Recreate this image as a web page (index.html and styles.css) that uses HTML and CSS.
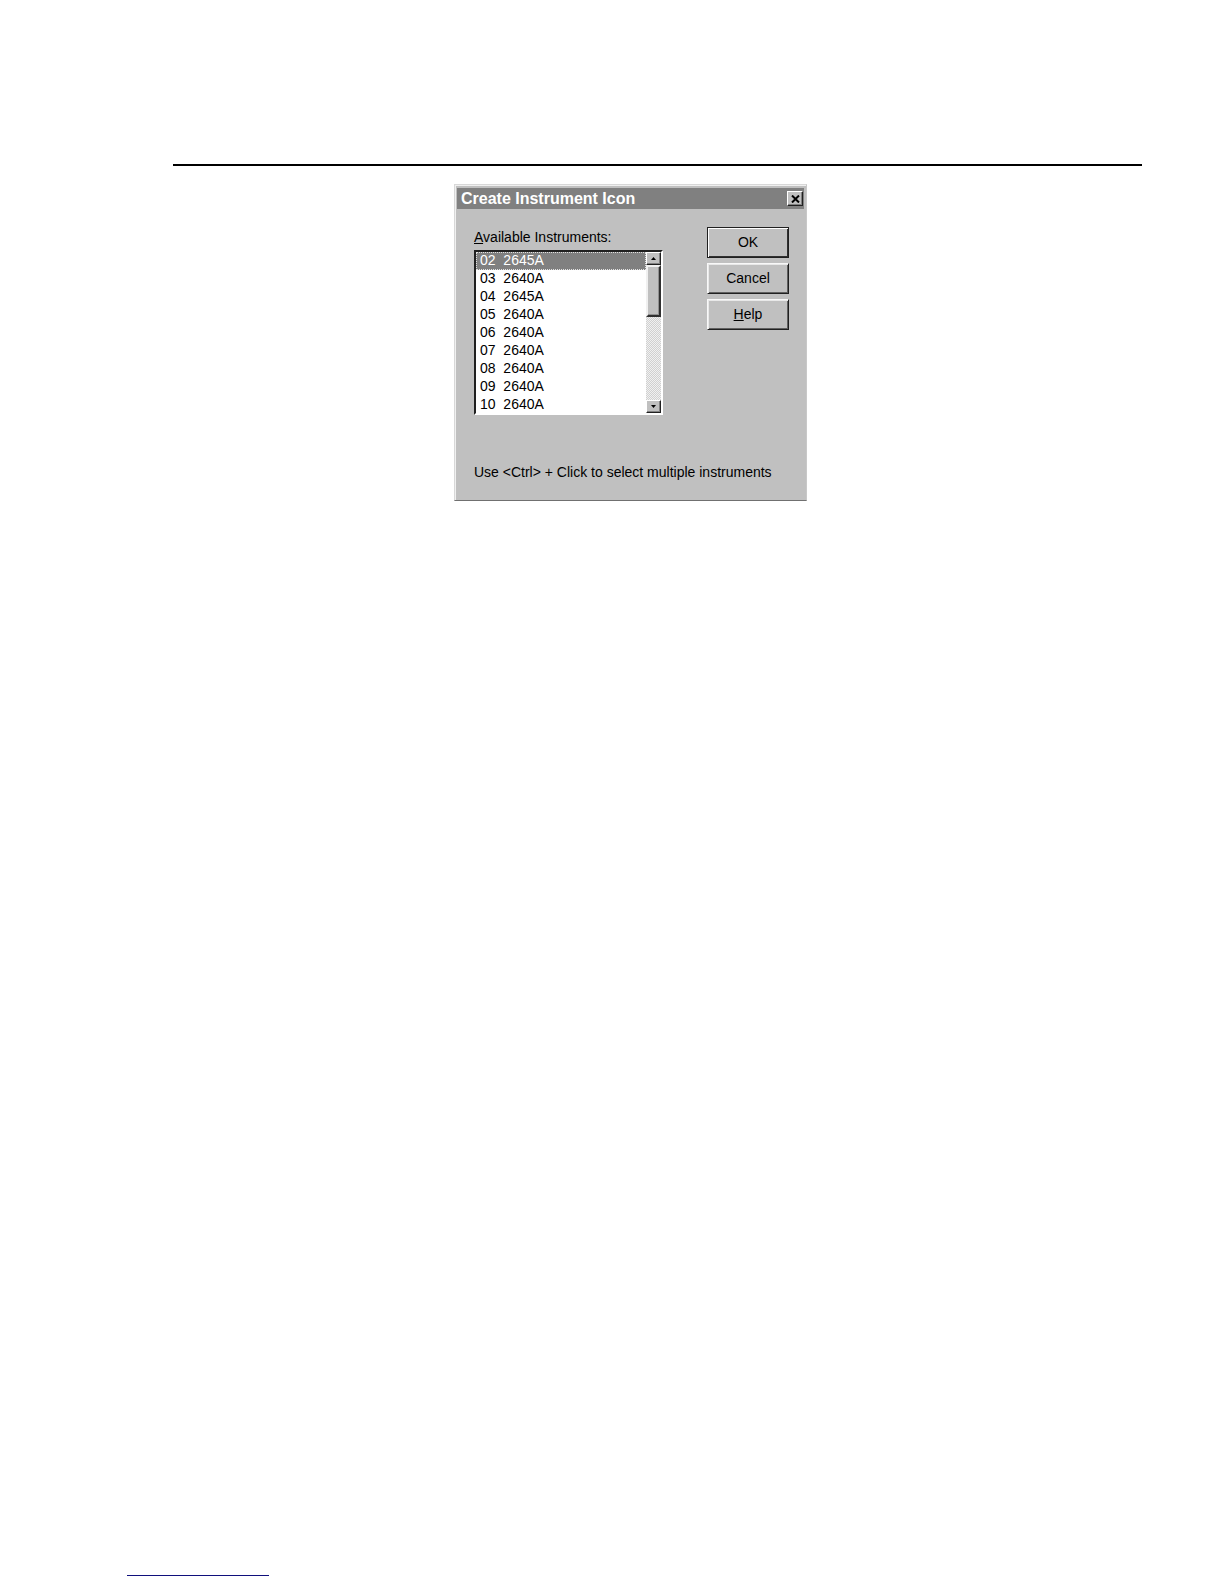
FILE: index.html
```html
<!DOCTYPE html>
<html lang="en">
<head>
<meta charset="utf-8">
<meta name="viewport" content="width=device-width, initial-scale=1">
<title>Create Instrument Icon</title>
<link rel="stylesheet" href="styles.css">
</head>
<body>
<main class="sheet">
  <hr class="rule">
  <section class="dialog" role="dialog" aria-labelledby="dialog-title">
    <header class="titlebar">
      <h1 class="title" id="dialog-title">Create Instrument Icon</h1>
      <button class="close" type="button" aria-label="Close">
        <svg viewBox="0 0 9 8" width="9" height="8"><path d="M1 0.5 L8 7.5 M8 0.5 L1 7.5" stroke="#000" stroke-width="2"/></svg>
      </button>
    </header>
    <form class="form">
      <div class="columns">
        <div class="field">
          <label class="label" for="instruments"><u>A</u>vailable Instruments:</label>
          <div class="listbox">
            <select class="list" id="instruments" multiple size="9">
              <option selected>02&nbsp;&nbsp;2645A</option>
              <option>03&nbsp;&nbsp;2640A</option>
              <option>04&nbsp;&nbsp;2645A</option>
              <option>05&nbsp;&nbsp;2640A</option>
              <option>06&nbsp;&nbsp;2640A</option>
              <option>07&nbsp;&nbsp;2640A</option>
              <option>08&nbsp;&nbsp;2640A</option>
              <option>09&nbsp;&nbsp;2640A</option>
              <option>10&nbsp;&nbsp;2640A</option>
            </select>
            <div class="scrollbar">
              <button class="arrow" type="button" aria-label="Scroll up"><svg viewBox="0 0 5 3" width="5" height="3"><path d="M2.5 0 L5 3 H0 Z"/></svg></button>
              <div class="thumb"></div>
              <div class="track"></div>
              <button class="arrow" type="button" aria-label="Scroll down"><svg viewBox="0 0 5 3" width="5" height="3"><path d="M0 0 H5 L2.5 3 Z"/></svg></button>
            </div>
          </div>
        </div>
        <div class="actions">
          <button class="button default" type="button">OK</button>
          <button class="button" type="button">Cancel</button>
          <button class="button" type="button"><u>H</u>elp</button>
        </div>
      </div>
      <p class="hint">Use &lt;Ctrl&gt; + Click to select multiple instruments</p>
    </form>
  </section>
  <footer class="footer"><hr class="footline"></footer>
</main>
</body>
</html>
```
FILE: styles.css
```css
* { box-sizing: border-box; }

body {
  margin: 0;
  background: #fff;
  color: #000;
  font: 14px/18px "Liberation Sans", Arial, sans-serif;
}

.sheet {
  display: flex;
  flex-direction: column;
  min-height: 100vh;
  padding: 164px 82px 8px 127px;
}

.rule {
  align-self: stretch;
  height: 2px;
  margin: 0 0 18px 46px;
  border: 0;
  background: #000;
}

.dialog {
  width: 353px;
  max-width: 100%;
  margin-left: 327px;
  padding: 2px;
  background: #c0c0c0;
  border: 1px solid #d8d8d8;
  border-right-color: #c8c8c8;
  border-bottom: 1px solid #707070;
  box-shadow: inset 1px 1px #f0f0f0;
}

.titlebar {
  display: flex;
  align-items: center;
  justify-content: space-between;
  height: 21px;
  margin-top: 1px;
  padding: 0 1px 0 4px;
  background: #808080;
}

.title {
  margin: 0;
  color: #fff;
  font-size: 16px;
  line-height: 20px;
}

.close, .arrow {
  display: flex;
  align-items: center;
  justify-content: center;
  padding: 0;
  background: #c0c0c0;
  border: 1px solid;
  border-color: #fff #202020 #202020 #fff;
  box-shadow: inset -1px -1px #808080;
}

.close { width: 16px; height: 15px; }

.form { padding: 18px 15px 17px 17px; }

.columns {
  display: flex;
  justify-content: space-between;
}

.field { padding-top: 1px; }

.label { display: block; margin-bottom: 4px; }

.listbox {
  display: flex;
  width: 189px;
  height: 165px;
  border: 2px solid;
  border-color: #202020 #fff #fff #202020;
  background: #fff;
}

.list {
  flex: 1;
  min-width: 0;
  height: 100%;
  padding: 0;
  overflow: hidden;
  scrollbar-width: none;
  border: 0;
  border-radius: 0;
  outline: 0;
  background: #fff;
  color: #000;
  font: inherit;
}

.list option {
  height: 18px;
  min-height: 18px;
  padding: 0 4px;
  line-height: 18px;
}

.list option:checked {
  background: #808080 linear-gradient(#808080, #808080);
  color: #fff;
  outline: 1px dotted #e0e0e0;
  outline-offset: -1px;
}

.scrollbar {
  display: flex;
  flex-direction: column;
  width: 15px;
  background: #e0e0e0 repeating-conic-gradient(#d0d0d0 0 25%, #f0f0f0 0 50%) 0 0 / 2px 2px;
}

.arrow { width: 100%; height: 13px; }

.thumb {
  height: 52px;
  background: #c0c0c0;
  border: 2px solid;
  border-color: #f0f0f0 #303030 #303030 #f0f0f0;
  box-shadow: inset -1px -1px #909090;
}

.track { flex: 1; }

.actions {
  display: flex;
  flex-direction: column;
  gap: 5px;
  width: 82px;
}

.button {
  height: 31px;
  padding: 0 0 2px;
  background: #c0c0c0;
  border: 1px solid;
  border-color: #f8f8f8 #202020 #202020 #f8f8f8;
  box-shadow: inset 1px 1px #e8e8e8, inset -1px -1px #606060;
  color: #000;
  font: inherit;
}

.default {
  border-color: #202020;
  box-shadow: inset 1px 1px #fff, inset -1px -1px #303030;
}

.hint { margin: 48px 0 0; }

.footer { margin-top: auto; }

.footline {
  width: 142px;
  height: 1px;
  margin: 0;
  border: 0;
  background: #10107c;
}
```
